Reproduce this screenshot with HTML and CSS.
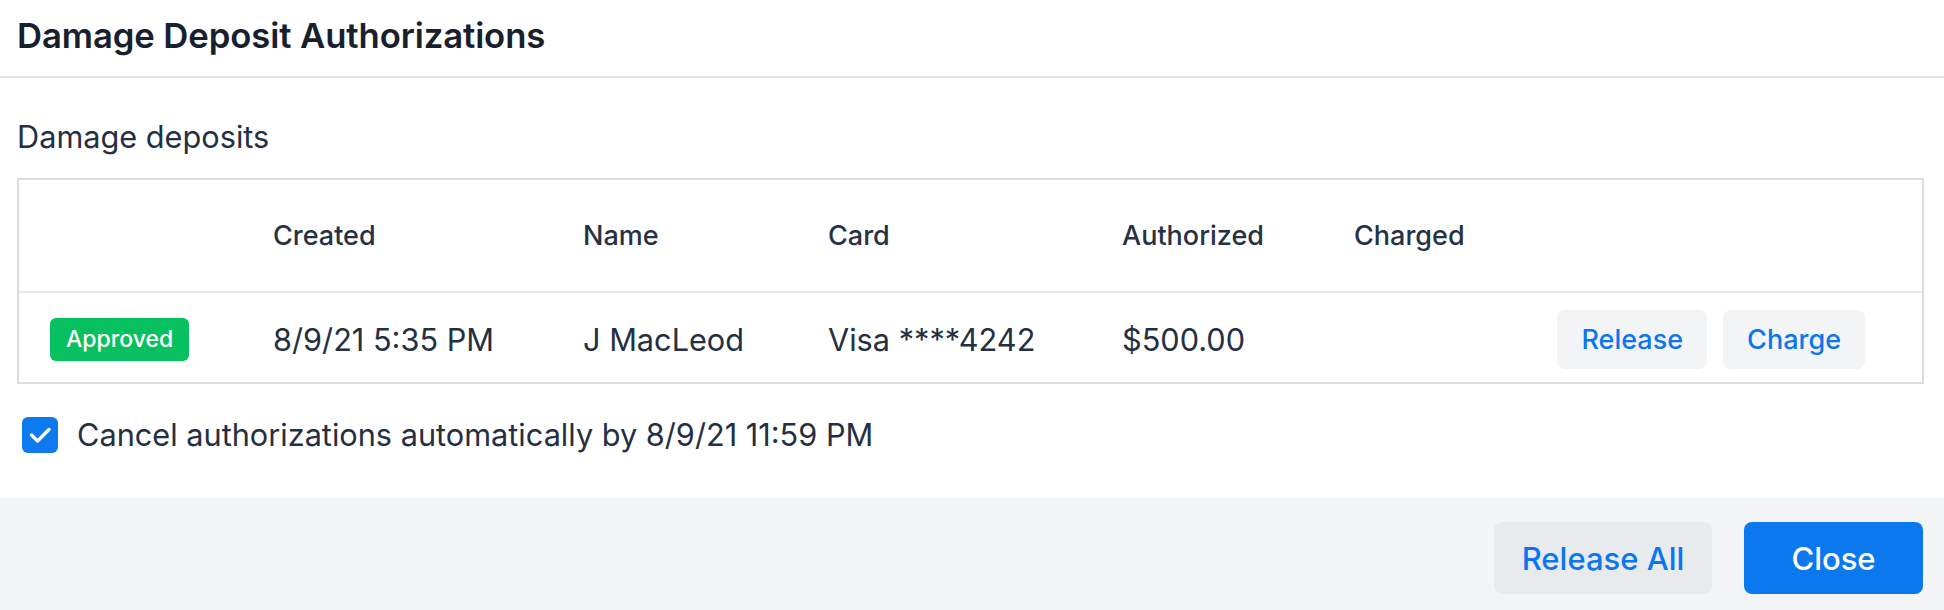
FILE: index.html
```html
<!DOCTYPE html>
<html lang="en">
<head>
<meta charset="utf-8">
<title>Damage Deposit Authorizations</title>
<link rel="stylesheet" href="styles.css">
</head>
<body>
<div class="modal">
  <header class="modal-header">
    <h1 class="modal-title">Damage Deposit Authorizations</h1>
  </header>
  <main class="modal-body">
    <div class="section-label">Damage deposits</div>
    <div class="table">
      <div class="row head">
        <div class="cell status"></div>
        <div class="cell">Created</div>
        <div class="cell">Name</div>
        <div class="cell">Card</div>
        <div class="cell">Authorized</div>
        <div class="cell">Charged</div>
        <div class="cell actions"></div>
      </div>
      <div class="row body">
        <div class="cell status"><span class="badge">Approved</span></div>
        <div class="cell">8/9/21 5:35 PM</div>
        <div class="cell">J MacLeod</div>
        <div class="cell">Visa ****4242</div>
        <div class="cell">$500.00</div>
        <div class="cell"></div>
        <div class="cell actions">
          <button class="btn-soft">Release</button>
          <button class="btn-soft">Charge</button>
        </div>
      </div>
    </div>
    <label class="check-row">
      <span class="checkbox">
        <svg viewBox="0 0 36 36" width="36" height="36"><polyline points="9.5,18 15.5,24 27,12.5" fill="none" stroke="#fff" stroke-width="3.4" stroke-linecap="round" stroke-linejoin="round"/></svg>
      </span>
      <span class="check-text">Cancel authorizations automatically by 8/9/21 11:59 PM</span>
    </label>
  </main>
  <footer class="modal-footer">
    <button class="btn-secondary">Release All</button>
    <button class="btn-primary">Close</button>
  </footer>
</div>
</body>
</html>
```
FILE: styles.css
```css
* { box-sizing: border-box; }
html, body { margin: 0; padding: 0; background: #fff; }
body {
  font-family: "Inter", "Noto Sans", "Liberation Sans", sans-serif;
  color: #243042;
  width: 1944px;
  height: 610px;
  overflow: hidden;
}
.modal { display: flex; flex-direction: column; height: 610px; }
.modal-header {
  height: 78px;
  display: flex;
  align-items: center;
  padding: 0 17px 6px;
  border-bottom: 2px solid #e0e4e8;
}
.modal-title {
  margin: 0;
  font-size: 34.7px;
  font-weight: 600;
  color: #18202e;
  letter-spacing: -0.1px;
}
.modal-body {
  padding: 36px 20px 0 17px;
  flex: 1;
}
.section-label {
  font-size: 30.7px;
  line-height: 45px;
  margin-bottom: 19px;
}
.table {
  border: 2px solid #d9dde2;
}
.row {
  display: grid;
  grid-template-columns: 254px 310px 245px 294px 232px 1fr auto;
  align-items: center;
}
.row.head {
  height: 113px;
  border-bottom: 2px solid #e5e8ec;
  font-size: 27px;
  font-weight: 500;
  color: #263244;
}
.row.body {
  height: 89px;
  font-size: 30.7px;
  padding-top: 3px;
}
.cell.status { padding-left: 31px; }
.badge {
  display: inline-flex;
  align-items: center;
  height: 43px;
  padding: 0 16px;
  border-radius: 6px;
  background: #07c160;
  color: #fff;
  font-size: 23px;
  font-weight: 500;
}
.cell.actions {
  display: flex;
  gap: 16px;
  padding-right: 57px;
}
button {
  font-family: inherit;
  border: none;
  cursor: pointer;
}
.btn-soft {
  height: 59px;
  padding: 0 24px;
  border-radius: 8px;
  background: #f2f4f6;
  color: #0b76ef;
  font-size: 27px;
  font-weight: 500;
}
.check-row {
  display: flex;
  align-items: center;
  gap: 19px;
  margin-top: 32px;
  padding-left: 5px;
}
.checkbox {
  width: 36px;
  height: 36px;
  border-radius: 6px;
  background: #0d7aef;
  display: flex;
}
.check-text { font-size: 30.7px; }
.modal-footer {
  height: 112px;
  background: #f3f4f6;
  display: flex;
  justify-content: flex-end;
  align-items: flex-start;
  gap: 32px;
  padding: 24px 21px 0 0;
}
.btn-secondary, .btn-primary {
  height: 72px;
  border-radius: 8px;
  font-size: 31px;
  font-weight: 500;
}
.btn-secondary {
  width: 218px;
  background: #e8ebee;
  color: #0b76ef;
}
.btn-primary {
  width: 179px;
  background: #0b78f0;
  color: #fff;
}
```
